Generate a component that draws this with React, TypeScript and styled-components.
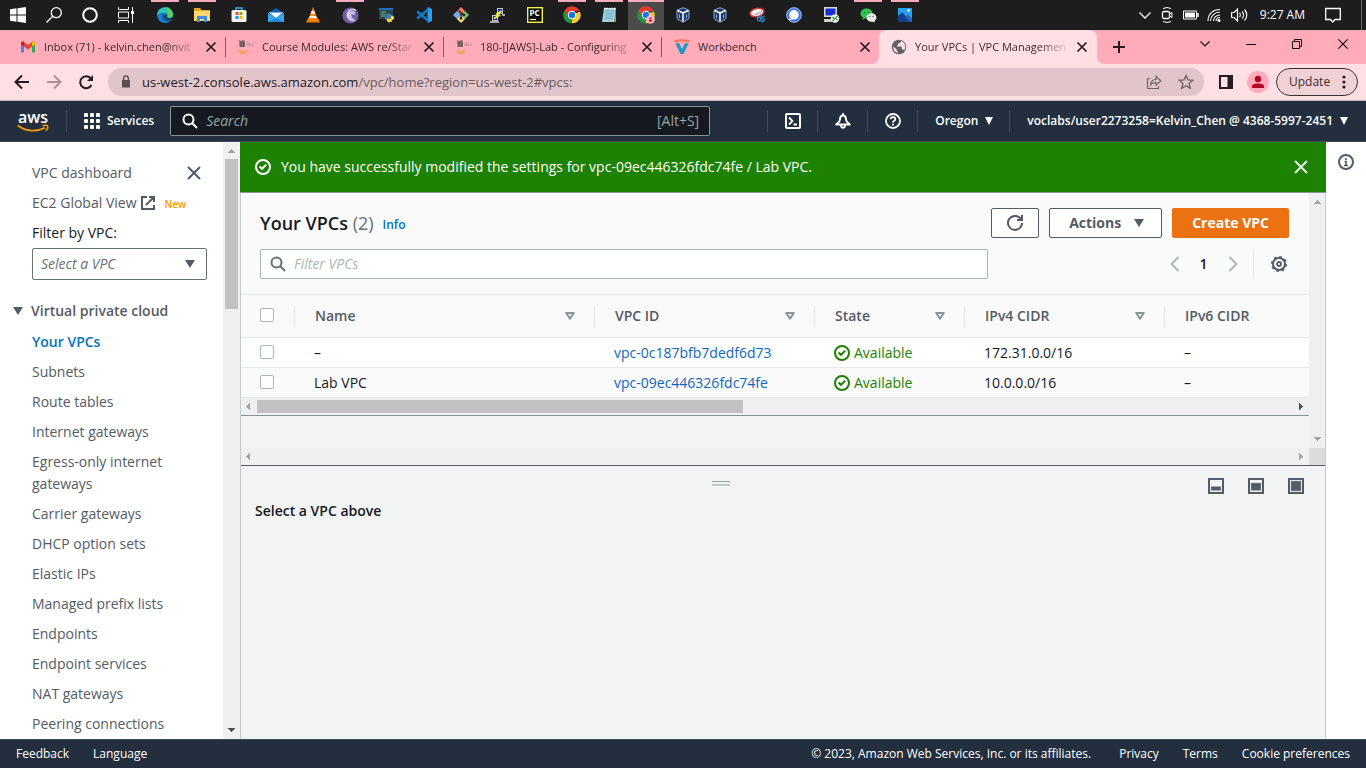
import React from "react";
import styled, { createGlobalStyle, css } from "styled-components";

const sans = '"Open Sans", "Noto Sans", sans-serif';

const Global = createGlobalStyle`
  *, *::before, *::after { box-sizing: border-box; }
  body { margin: 0; background: #fff; overflow: hidden; }
  button { font: inherit; color: inherit; background: none; border: 0; padding: 0; cursor: pointer; }
  a { color: inherit; text-decoration: none; }
  ul { list-style: none; margin: 0; padding: 0; }
  h1, h2, p { margin: 0; }
  svg { display: block; flex: none; }
`;

const Screen = styled.div`
  display: flex;
  flex-direction: column;
  height: 100vh;
  font-family: ${sans};
  font-size: 14px;
  line-height: 22px;
  color: #16191f;
`;

/* ---------- Windows task bar ---------- */

const TaskBar = styled.header`
  display: flex;
  flex: none;
  height: 30px;
  background: #1d1d1d;
  color: #fff;
  font-size: 12px;
`;
const TaskGroup = styled.div`
  display: flex;
`;
const AppGroup = styled(TaskGroup)`
  gap: 1px;
  margin-left: 3px;
`;
const TaskButton = styled.button<{ $open?: boolean; $active?: boolean }>`
  display: flex;
  align-items: center;
  justify-content: center;
  width: 36px;
  height: 30px;
  background: ${(p) => (p.$active ? "#4b4b4b" : "none")};
  ${(p) =>
    (p.$open || p.$active) &&
    css`
      background-image: linear-gradient(#ffabb9, #ffabb9);
      background-repeat: no-repeat;
      background-position: top;
      background-size: ${p.$active ? "36px" : "28px"} 2px;
    `}
`;
const Tray = styled.div`
  display: flex;
  align-items: center;
  gap: 8px;
  margin-left: auto;
`;
const Clock = styled.time`
  margin: 0 12px 0 4px;
`;
const ShowDesktop = styled.button`
  width: 5px;
  height: 30px;
  margin-left: 12px;
  border-left: 1px solid #6b6b6b;
`;

/* ---------- Browser frame ---------- */

const TabStrip = styled.div`
  display: flex;
  flex: none;
  height: 34px;
  padding-left: 8px;
  background: #ffabb9;
  font-size: 11px;
  color: #3a2a2d;
`;
const Tab = styled.div<{ $active?: boolean; $divided?: boolean }>`
  position: relative;
  display: flex;
  align-items: center;
  flex: 0 1 218px;
  min-width: 0;
  padding: 0 9px 0 12px;
  ${(p) =>
    p.$divided &&
    css`
      background: linear-gradient(#84585f, #84585f) right center / 1px 20px no-repeat;
    `}
  ${(p) =>
    p.$active &&
    css`
      margin-left: -1px;
      background: #ffdfe4;
      border-radius: 8px 8px 0 0;
      &::before,
      &::after {
        content: "";
        position: absolute;
        bottom: 0;
        width: 8px;
        height: 8px;
      }
      &::before {
        left: -8px;
        background: radial-gradient(circle at 0 0, transparent 8px, #ffdfe4 8px);
      }
      &::after {
        right: -8px;
        background: radial-gradient(circle at 100% 0, transparent 8px, #ffdfe4 8px);
      }
    `}
`;
const TabTitle = styled.span<{ $fade: boolean }>`
  flex: 1;
  min-width: 0;
  margin: 0 6px 0 8px;
  overflow: hidden;
  white-space: nowrap;
  ${(p) => p.$fade && "mask-image: linear-gradient(to right, #000 calc(100% - 30px), transparent);"}
`;
const WindowButton = styled.button`
  display: flex;
  align-items: center;
  justify-content: center;
  width: 46px;
  height: 28px;
`;
const NewTab = styled(WindowButton)`
  width: 28px;
  height: 34px;
  margin: 0 auto 0 8px;
`;
const Toolbar = styled.div`
  display: flex;
  flex: none;
  align-items: center;
  height: 37px;
  padding: 0 8px 1px 6px;
  background: #ffdfe4;
  border-bottom: 1px solid #c8b6b9;
  font-size: 13px;
`;
const ToolButton = styled.button`
  display: flex;
  align-items: center;
  justify-content: center;
  width: 32px;
  height: 28px;
`;
const Omnibox = styled.div`
  display: flex;
  align-items: center;
  flex: 1;
  height: 28px;
  margin: 0 6px;
  padding: 0 2px 0 13px;
  border-radius: 14px;
  background: #e1c5ca;
`;
const Url = styled.span`
  flex: 1;
  margin-left: 11px;
  color: #6c5a5d;
  white-space: nowrap;
  b {
    font-weight: 400;
    color: #241c1e;
  }
`;
const Avatar = styled.span`
  display: flex;
  width: 22px;
  height: 22px;
  border-radius: 11px;
  background: #ffabb9;
`;
const UpdateButton = styled.button`
  display: flex;
  align-items: center;
  justify-content: space-between;
  width: 82px;
  height: 28px;
  margin-left: 2px;
  padding: 0 11px 0 12px;
  border: 1px solid #3b3335;
  border-radius: 14px;
  background: #efd1d6;
  font-size: 12px;
  color: #3a2a2d;
`;

/* ---------- Console navigation ---------- */

const ConsoleNav = styled.nav`
  display: flex;
  flex: none;
  align-items: center;
  height: 41px;
  background: #232f3e;
  border-bottom: 1px solid #414d5c;
  color: #fff;
  font-size: 12px;
  font-weight: 600;
`;
const NavCell = styled.div`
  display: flex;
  align-items: center;
  height: 22px;
  padding: 0 16px 0 17px;
  border-left: 1px solid #414d5c;
`;
const LogoLink = styled.a`
  padding: 0 17px;
`;
const AccountCell = styled(NavCell)`
  padding-right: 18px;
`;
const NavButton = styled.button`
  display: flex;
  align-items: center;
  gap: 7px;
  white-space: nowrap;
`;
const SearchBox = styled.label`
  display: flex;
  align-items: center;
  flex: 0 1 540px;
  height: 30px;
  padding: 0 10px 0 11px;
  border: 1px solid #879596;
  border-radius: 2px;
  background: #16191f;
  color: #95a5a6;
  font-size: 14px;
  font-weight: 400;
`;
const SearchInput = styled.input`
  flex: 1;
  min-width: 0;
  margin-left: 8px;
  padding: 0;
  border: 0;
  outline: 0;
  background: none;
  font: inherit;
  color: inherit;
  &::placeholder {
    color: inherit;
    font-style: italic;
    opacity: 1;
  }
`;
const NavEnd = styled.div`
  display: flex;
  margin-left: auto;
`;

/* ---------- Body ---------- */

const Body = styled.div`
  display: flex;
  flex: 1;
  min-height: 0;
`;
const Sidebar = styled.aside`
  display: flex;
  flex: none;
  width: 240px;
  overflow: hidden;
  color: #545b64;
`;
const SideContent = styled.div`
  flex: 1;
  padding: 20px 16px 0 13px;
`;
const SideRow = styled.div`
  display: flex;
  align-items: center;
  height: 22px;
  margin-bottom: 8px;
  padding-left: 19px;
`;
const SideClose = styled.button`
  margin: 0 5px 0 auto;
`;
const NewBadge = styled.span`
  margin: 2px 0 0 8px;
  font-size: 10px;
  font-weight: 600;
  color: #ff9900;
`;
const FilterLabel = styled.label`
  display: block;
  padding-left: 19px;
  color: #16191f;
`;
const SelectWrap = styled.div`
  display: grid;
  align-items: center;
  height: 32px;
  margin: 4px 0 20px 19px;
  border: 1px solid #687078;
  border-radius: 2px;
  > * {
    grid-area: 1 / 1;
  }
  > svg {
    justify-self: end;
    margin-right: 11px;
    pointer-events: none;
  }
`;
const VpcSelect = styled.select`
  width: 100%;
  height: 30px;
  padding: 0 8px;
  appearance: none;
  border: 0;
  background: none;
  font: inherit;
  font-style: italic;
  color: #687078;
`;
const SectionToggle = styled.button`
  display: flex;
  align-items: center;
  gap: 8px;
  margin-bottom: 5px;
  font-weight: 600;
`;
const SideItem = styled.li<{ $current?: boolean }>`
  padding: 4px 0 4px 19px;
  ${(p) => p.$current && "color: #0073bb; font-weight: 600;"}
`;

const Track = styled.div<{ $horizontal?: boolean }>`
  display: flex;
  flex: none;
  flex-direction: ${(p) => (p.$horizontal ? "row" : "column")};
  align-items: center;
  justify-content: space-between;
  ${(p) => (p.$horizontal ? "height: 17px; padding: 0 6px 0 5px;" : "min-width: 16px; padding: 7px 0;")}
  background: #f0f0f0;
`;
const SideTrack = styled(Track)`
  width: 17px;
`;
const Thumb = styled.div<{ $length: string; $horizontal?: boolean }>`
  flex: none;
  ${(p) =>
    p.$horizontal
      ? `width: ${p.$length}; height: 13px; margin: 0 auto 0 7px;`
      : `width: 13px; height: ${p.$length}; margin: 6px 0 auto;`}
  background: #c1c1c1;
`;

const Main = styled.main`
  display: flex;
  flex: 1;
  flex-direction: column;
  min-width: 0;
`;
const Flash = styled.div`
  display: flex;
  align-items: center;
  gap: 10px;
  height: 51px;
  padding: 0 17px 0 15px;
  background: #1d8102;
  border-bottom: 1px solid #879596;
  color: #fff;
`;
const FlashClose = styled.button`
  margin-left: auto;
`;
const Split = styled.div`
  display: flex;
  flex: 1;
  flex-direction: column;
  min-height: 0;
  border: solid #c5cbcb;
  border-width: 0 1px;
  background: #f2f3f3;
`;
const ListArea = styled.div`
  display: grid;
  grid-template-columns: minmax(0, 1fr) 16px;
  grid-template-rows: 255px 17px;
  border-bottom: 1px solid #545b64;
`;
const Corner = styled.div`
  background: #dcdcdc;
`;
const ListPane = styled.section`
  overflow: hidden;
`;
const ListHeader = styled.div`
  display: flex;
  flex-direction: column;
  gap: 11px;
  padding: 15px 20px 15px 19px;
  background: #fafafa;
  border-bottom: 1px solid #e5e8e8;
`;
const HeaderRow = styled.div`
  display: flex;
  align-items: center;
  height: 30px;
`;
const Title = styled.h1`
  font-size: 18px;
  font-weight: 600;
  span {
    font-weight: 400;
    color: #687078;
  }
`;
const InfoLink = styled.a`
  margin: 4px auto 0 9px;
  font-size: 12px;
  font-weight: 600;
  color: #0073bb;
`;
const Button = styled.button<{ $primary?: boolean }>`
  display: flex;
  align-items: center;
  justify-content: center;
  gap: 13px;
  height: 30px;
  margin-left: 10px;
  padding: 0 ${(p) => (p.$primary ? 19 : 17)}px 0 19px;
  border: 1px solid ${(p) => (p.$primary ? "#ec7211" : "#545b64")};
  border-radius: 2px;
  background: ${(p) => (p.$primary ? "#ec7211" : "#fff")};
  color: ${(p) => (p.$primary ? "#fff" : "#545b64")};
  font-weight: 700;
`;
const IconButton = styled(Button)`
  width: 48px;
  padding: 0;
`;
const FilterBox = styled.label`
  display: flex;
  align-items: center;
  flex: 0 1 728px;
  height: 30px;
  padding-left: 9px;
  border: 1px solid #aab7b8;
  border-radius: 2px;
  background: #fff;
  color: #aab7b8;
`;
const Pager = styled.div`
  display: flex;
  align-items: center;
  height: 30px;
  margin: 0 6px 0 auto;
  font-weight: 600;
`;
const PageButton = styled.button`
  display: flex;
  align-items: center;
  justify-content: center;
  width: 29px;
  height: 30px;
`;
const GearButton = styled.button`
  height: 30px;
  padding: 0 2px 0 17px;
  border-left: 1px solid #e5e8e8;
`;

const Table = styled.table`
  width: 100%;
  table-layout: fixed;
  border-spacing: 0;
  background: #fff;
`;
const Th = styled.th<{ $width?: number }>`
  ${(p) => p.$width && `width: ${p.$width}px;`}
  height: 43px;
  padding: 0;
  background: #fafafa;
  border-bottom: 1px solid #e5e8e8;
  text-align: left;
  font-weight: 600;
  color: #545b64;
`;
const HeadCell = styled.div`
  display: flex;
  align-items: center;
  justify-content: space-between;
  height: 21px;
  padding: 0 19px 0 20px;
  border-left: 1px solid #e0e4e4;
`;
const Td = styled.td`
  height: 30px;
  padding: 0 0 0 20px;
  border-bottom: 1px solid #e5e8e8;
  white-space: nowrap;
  tr:nth-child(even) > & {
    background: #fafafa;
  }
`;
const CheckTd = styled(Td)`
  padding-left: 19px;
`;
const Check = styled.input`
  display: block;
  width: 14px;
  height: 14px;
  margin: 0 0 2px;
  appearance: none;
  border: 1px solid #aab7b8;
  border-radius: 2px;
  background: #fff;
`;
const HeadCheck = styled(Check)`
  margin-left: 19px;
`;
const CellLink = styled.a`
  color: #1166bb;
`;
const Status = styled.span`
  display: flex;
  align-items: center;
  gap: 4px;
  color: #1d8102;
`;
const TableTrack = styled(Track)`
  border-bottom: 1px solid #879596;
  height: 18px;
`;

const DetailBar = styled.div`
  display: flex;
  align-items: center;
  padding: 0 9px 0 5px;
  height: 34px;
`;
const Grip = styled.div`
  flex: 1;
  display: flex;
  justify-content: center;
`;
const GripLines = styled.span`
  width: 18px;
  height: 5px;
  border-top: 1px solid #96a0a0;
  border-bottom: 2px solid #c4c9c9;
`;
const SizeButton = styled.button`
  display: flex;
  justify-content: center;
  width: 40px;
  padding-top: 6px;
`;
const DetailTitle = styled.h2`
  padding-left: 14px;
  font-size: 14px;
  font-weight: 600;
`;
const HelpRail = styled.aside`
  display: flex;
  flex: none;
  justify-content: center;
  align-items: flex-start;
  width: 40px;
  padding-top: 12px;
`;

const Footer = styled.footer`
  display: flex;
  flex: none;
  align-items: center;
  gap: 24px;
  height: 29px;
  padding: 0 16px;
  border-top: 1px solid #414d5c;
  background: #232f3e;
  color: #fff;
  font-size: 12px;
`;
const Copyright = styled.span`
  margin: 0 4px 0 auto;
`;

/* ---------- Icons ---------- */

type Stroke = { size?: number; color?: string; width?: number; d: string; box?: number };
const Line = ({ size = 16, color = "currentColor", width = 2, d, box = 16 }: Stroke) => (
  <svg width={size} height={size} viewBox={`0 0 ${box} ${box}`} fill="none" stroke={color} strokeWidth={width}>
    <path d={d} />
  </svg>
);
const Cross = ({ size = 16, color = "#545b64", width = 2 }: { size?: number; color?: string; width?: number }) => (
  <Line size={size} color={color} width={width} d="M2 2l12 12M14 2L2 14" />
);
const Caret = ({ w = 10, color = "currentColor" }: { w?: number; color?: string }) => (
  <svg width={w} height="8" viewBox="0 0 10 8" fill={color} preserveAspectRatio="none">
    <path d="M0 0h10L5 8z" />
  </svg>
);
const SortIcon = () => (
  <svg width="10" height="8" viewBox="0 0 10 8" fill="none" stroke="#879596" strokeWidth="2" strokeLinejoin="round">
    <path d="M1.2 1h7.6L5 6.6z" />
  </svg>
);
const OkIcon = () => (
  <svg width="16" height="16" viewBox="0 0 16 16" fill="none" stroke="currentColor" strokeWidth="2">
    <circle cx="8" cy="8" r="7" />
    <path d="M4.500 7.500L7 9.800l4.200-4.200" />
  </svg>
);
const Magnifier = ({ color }: { color: string }) => (
  <svg width="16" height="16" viewBox="0 0 16 16" fill="none" stroke={color} strokeWidth="2">
    <circle cx="6.500" cy="6.500" r="5" />
    <path d="M10.300 10.300L15 15" />
  </svg>
);
const arrowPaths = { up: "M0 4h7L3.500 0z", down: "M0 0h7L3.500 4z", left: "M4 0v7L0 3.500z", right: "M0 0v7l4-3.500z" };
const ScrollArrow = ({ dir, dark }: { dir: keyof typeof arrowPaths; dark?: boolean }) => {
  const flat = dir === "up" || dir === "down";
  return (
    <svg width={flat ? 7 : 4} height={flat ? 4 : 7} fill={dark ? "#505050" : "#a3a3a3"} shapeRendering="crispEdges">
      <path d={arrowPaths[dir]} />
    </svg>
  );
};
const AwsLogo = () => (
  <svg width="32" height="28" viewBox="0 -4 32 28">
    <text x="16" y="12" textAnchor="middle" fontFamily="Open Sans, sans-serif" fontSize="16" fontWeight="600" fill="#fff">
      aws
    </text>
    <path d="M.8 14.500C9 20.800 20 21 28 16.800" fill="none" stroke="#f90" strokeWidth="1.800" />
    <path d="M25.500 14.900c2-1 4.500-.8 5 0 .4 1-.2 3.500-1.800 5" fill="none" stroke="#f90" strokeWidth="1.500" />
  </svg>
);
const CourseIcon = () => (
  <svg width="16" height="16" viewBox="0 0 16 16">
    <path d="M1 1l2 1 2-1 2 1v6H1.500z" fill="#8a6b72" />
    <path d="M3 3v5M5.500 3v5" stroke="#55454a" strokeWidth=".8" />
    <path d="M9 3.500v3h1.500v-3M12 3.500v3h3v-3" fill="none" stroke="#d296a1" strokeWidth="1.200" />
    <path d="M1.500 11c1 4 5.500 4 7 0" fill="none" stroke="#ff9a3c" strokeWidth="2" />
  </svg>
);
const GmailIcon = () => (
  <svg width="16" height="16" viewBox="0 0 16 16">
    <path d="M1 4v9.500h3V7z" fill="#4285f4" />
    <path d="M15 4v9.500h-3V7z" fill="#34a853" />
    <path d="M1 4.500C1 2.500 3 2 4 3l4 3 4-3c1-1 3-.5 3 1.500L12 7.500l-4 3-4-3z" fill="#ea4335" />
    <path d="M12 3c1-1 3-.5 3 1.500v1L12 7.500z" fill="#fbbc04" />
    <path d="M1 4.500C1 3 2 2.500 3 2.600L4 3v4.500L1 5.500z" fill="#c5221f" />
  </svg>
);
const WorkbenchIcon = () => (
  <svg width="16" height="16" viewBox="0 0 16 16">
    <path d="M0 1.500C5-.3 11-.3 16 1.500l-1 2C10 2 6 2 1 3.500z" fill="#f4795b" />
    <path d="M1.500 4.500L5 4l3 6 3-6 3.500.5L9.500 15h-3z" fill="#2196c9" />
  </svg>
);
const GlobeIcon = () => (
  <svg width="16" height="16" viewBox="0 0 16 16">
    <circle cx="8" cy="8" r="7.300" fill="#5f6368" />
    <path d="M10 2c0 1.500-.8 2-2 2-.6 0-.8.400-.8 1.200 0 .7-.4 1-1.200 1v1.300h3.500c1 0 1.300.5 1.300 1.300v1.500c1.200 0 1.900.4 2.200 1.200A6 6 0 0 0 10 2zM2.200 7.500A6 6 0 0 0 7 13.800v-1.200c-.8 0-1.300-.5-1.300-1.300v-.8z" fill="#ffdfe4" />
  </svg>
);
const ChromeIcon = ({ badge }: { badge?: boolean }) => (
  <svg width="18" height="18" viewBox="0 0 18 18">
    <path d="M9 9l7.800-3.500A8.300 8.300 0 0 1 8.500 17.300z" fill="#fcc934" />
    <path d="M9 9l1 3-1.500 5.300A8.300 8.300 0 0 1 1.600 4.500z" fill="#229342" />
    <path d="M1.600 4.500A8.300 8.300 0 0 1 16.500 5.200H9l-3.500 6z" fill="#e33b2e" />
    <circle cx="9" cy="9" r="4.200" fill="#fff" />
    <circle cx="9" cy="9" r="3.200" fill="#1a73e8" />
    {badge && <circle cx="13.500" cy="13.500" r="4.300" fill="#f7b3bf" />}
    {badge && <path d="M12 15.200a1.500 1.300 0 0 1 3 0zM12.800 12.500a.7.7 0 1 0 1.400 0 .7.7 0 1 0-1.400 0" fill="#b00020" stroke="#b00020" strokeWidth=".5" />}
  </svg>
);
const CubeIcon = () => (
  <svg width="14" height="16" viewBox="0 0 14 16" stroke="#fff" strokeWidth="1">
    <path d="M7 .7l6 2.500v8.300L7 15.300 1 11.500V3.200z" fill="#1d3a6b" stroke="#8fa8cf" />
    <path d="M1.500 3.500L7 6l5.500-2.500M7 6v8.500" fill="none" strokeWidth="1.500" />
    <path d="M3.500 7.500v3.500M10.500 7.500v3.500" stroke="#8fb0e0" />
  </svg>
);

const taskIcons: { name: string; open?: boolean; active?: boolean; icon: React.ReactNode }[] = [
  { name: "Edge", open: true, icon: (
    <svg width="16" height="16" viewBox="0 0 16 16">
      <circle cx="8" cy="8" r="8" fill="#1583d1" />
      <path d="M.3 6.500A8 8 0 0 1 16 7.500c0 3-4 4-6 2.500 1.500-2 0-4-2.500-4.200C4.500 5.500 2 6 .3 8z" fill="#35c2b0" />
      <path d="M9 .1A8 8 0 0 1 16 8c-.3 2.500-4 3.200-6 2C12 7 11 3 9 .1z" fill="#55d16a" />
      <path d="M6 6.500c-2 3.500 0 8 5 8.300a8 8 0 0 0 3.700-2.500C10 14 8 11.500 8.500 9.500z" fill="#0f4f96" />
      <path d="M8.500 7c2 .5 1.500 2 1 3 2 2 5 1.300 6.300 0-.3 1-.6 1.800-1.100 2.300C10.500 13.500 7 10 8.500 7z" fill="#1d1d1d" />
    </svg>) },
  { name: "Files", open: true, icon: (
    <svg width="16" height="14" viewBox="0 0 16 14">
      <path d="M0 0h6l1.500 2H16v11H0z" fill="#e5a919" /><path d="M0 3h16v10H0z" fill="#ffd76e" />
      <path d="M3 14V8h10v6h-3v-3H6v3z" fill="#3f8fdc" />
    </svg>) },
  { name: "Store", icon: (
    <svg width="16" height="16" viewBox="0 0 16 16">
      <path d="M5 3V1h6v2" fill="none" stroke="#39aee8" strokeWidth="1.500" /><rect x=".5" y="3" width="15" height="12" rx="1.500" fill="#f4f4f4" />
      <path d="M4.500 5H7.500V8H4.500z" fill="#f25022" /><path d="M8.500 5H11.500V8H8.500z" fill="#7fba00" />
      <path d="M4.500 9H7.500V12H4.500z" fill="#00a4ef" /><path d="M8.500 9H11.500V12H8.500z" fill="#ffb900" />
    </svg>) },
  { name: "Mail", icon: (
    <svg width="16" height="14" viewBox="0 0 16 14">
      <path d="M0 5l8-5 8 5v9H0z" fill="#0f5fb0" />
      <path d="M0 5l8 5 8-5v9H0z" fill="#35a8ee" /><path d="M1 4.500h14L8 10z" fill="#f2f8ff" /><path d="M0 14l8-4 8 4z" fill="#1f86d8" />
    </svg>) },
  { name: "VLC", icon: (
    <svg width="14" height="16" viewBox="0 0 14 16">
      <path d="M2 11h10l2 4.500H0z" fill="#f07c00" /><path d="M7 0l4.500 12c-2 1.500-7 1.500-9 0z" fill="#f58a12" />
      <path d="M5.600 4h2.800l1 2.800H4.600zM3.800 9h6.400l.7 2H3.100z" fill="#f4f4f4" />
    </svg>) },
  { name: "BitTorrent", open: true, icon: (
    <svg width="17" height="17" viewBox="0 0 17 17">
      <circle cx="8.500" cy="8.500" r="8" fill="#6f5fa8" />
      <path d="M14 3.500A5.500 5.500 0 1 0 13 13M13 6a3.500 3.500 0 1 0-1.500 5.500M12 8a1.800 1.800 0 1 0-2 2" fill="none" stroke="#e4def2" strokeWidth="1.300" />
    </svg>) },
  { name: "IDLE", icon: (
    <svg width="16" height="16" viewBox="0 0 16 16">
      <path d="M0 1h14v11H0z" fill="#35424f" /><path d="M0 1h14v2H0z" fill="#1d6fb8" />
      <path d="M2 5h5M2 7h4M2 9h5" stroke="#4cc38a" strokeWidth="1" />
      <path d="M7 8c0-2 5-2 5 0v3H8v2C5 13 5 9 8 9.500z" fill="#3d7fb5" /><path d="M12 8.500c4-.5 4 4 1 4.500 0 3-5 3-5 .5v-2h4z" fill="#ffd43b" />
    </svg>) },
  { name: "VS Code", icon: (
    <svg width="16" height="16" viewBox="0 0 16 16">
      <path d="M11.500 0L16 2v12l-4.500 2z" fill="#2aa0ea" />
      <path d="M12 2.500L1.200 11.500M12 13.500L1.200 4.500" stroke="#1279c6" strokeWidth="2.600" />
    </svg>) },
  { name: "Git", icon: (
    <svg width="18" height="18" viewBox="0 0 18 18">
      <path d="M9 1l4 4-4 4-4-4z" fill="#f2775f" /><path d="M5 5l4 4-4 4-4-4z" fill="#7aa7f0" /><path d="M13 5l4 4-4 4-4-4z" fill="#74c365" /><path d="M9 9l4 4-4 4-4-4z" fill="#ffe08a" />
      <path d="M6.500 4.500l5 4.500M9 6.500v6.500" stroke="#222" strokeWidth="1.300" /><circle cx="9" cy="12.500" r="1.300" fill="#222" /><circle cx="12" cy="9" r="1.300" fill="#222" />
    </svg>) },
  { name: "PuTTY", icon: (
    <svg width="16" height="16" viewBox="0 0 16 16">
      <path d="M7 1h6v6H7zM2 8h6v6H2z" fill="#bfc3c6" /><path d="M8 2h4v4H8zM3 9h4v4H3z" fill="#1526b5" />
      <path d="M12 8h3M0 15h9" stroke="#d5d5d5" strokeWidth="1.500" /><path d="M11.500 4L7 7l2 1.500-5 3" fill="none" stroke="#ffef2a" strokeWidth="2" />
    </svg>) },
  { name: "PyCharm", icon: (
    <svg width="16" height="16" viewBox="0 0 16 16">
      <rect x=".7" y=".7" width="14.600" height="14.600" fill="#0a0a0a" stroke="#f5f04a" strokeWidth="1.400" />
      <text x="2.500" y="9" fontFamily="Open Sans, sans-serif" fontWeight="700" fontSize="8" fill="#fff">PC</text>
      <path d="M3 12.500h6" stroke="#fff" strokeWidth="1.200" />
    </svg>) },
  { name: "Chrome", open: true, icon: <ChromeIcon /> },
  { name: "Notepad", open: true, icon: (
    <svg width="16" height="16" viewBox="0 0 16 16">
      <path d="M3 1h12l-1.500 14H1z" fill="#9fd3de" /><path d="M13.500 15L15 1v14z" fill="#b98a4b" />
      <path d="M4 4h9M4 6.500h8.500M3.500 9h9M3.500 11.500h8.500" stroke="#6fa8b8" strokeWidth="1" /><path d="M3 1.500h11.500" stroke="#e8f4f6" strokeWidth="1.500" strokeDasharray="1.500 1" />
    </svg>) },
  { name: "Chrome profile", active: true, icon: <ChromeIcon badge /> },
  { name: "VirtualBox", icon: <CubeIcon /> },
  { name: "VirtualBox manager", icon: <CubeIcon /> },
  { name: "Snipping Tool", icon: (
    <svg width="17" height="16" viewBox="0 0 17 16">
      <ellipse cx="8" cy="5.500" rx="7" ry="4" fill="#f3f3f3" stroke="#d8342f" strokeWidth="1.500" transform="rotate(-12 8 5.500)" />
      <path d="M6 8l7-3.500" stroke="#999" strokeWidth="1.200" /><circle cx="10" cy="12" r="1.700" fill="none" stroke="#2289c9" strokeWidth="1.400" /><circle cx="13.500" cy="13" r="1.700" fill="none" stroke="#2289c9" strokeWidth="1.400" /><path d="M11 10.500L16 9M12 11V7" stroke="#2289c9" />
    </svg>) },
  { name: "Signal", icon: (
    <svg width="16" height="16" viewBox="0 0 16 16">
      <circle cx="8" cy="8" r="7.300" fill="#3a76f0" stroke="#a8c4fb" strokeWidth="1" /><circle cx="8" cy="7.800" r="4.800" fill="#fff" /><path d="M3 13l1.500-4 3 3z" fill="#fff" />
    </svg>) },
  { name: "Remote desktop", icon: (
    <svg width="17" height="16" viewBox="0 0 17 16">
      <path d="M1 0h13v10H1z" fill="#d9d9d2" /><path d="M2.500 1.500h10v7h-10z" fill="#1a2ed0" /><path d="M1 12h11v3H1z" fill="#cfcfc8" />
      <circle cx="12" cy="11.500" r="4.200" fill="#eee" /><path d="M9.500 10l2 2-2 2M14.500 9l-2 2 2 2" fill="none" stroke="#3b9c36" strokeWidth="1.200" />
    </svg>) },
  { name: "WeChat", open: true, icon: (
    <svg width="17" height="15" viewBox="0 0 17 15">
      <ellipse cx="6.500" cy="5.500" rx="6" ry="5" fill="#2dc84d" /><path d="M3 9l-.5 3 3-2z" fill="#2dc84d" /><ellipse cx="11.500" cy="9.500" rx="5" ry="4.300" fill="#e9e9e9" /><path d="M14 12l1 2.500-3-1z" fill="#e9e9e9" />
      <circle cx="4.500" cy="4.500" r=".8" fill="#164" /><circle cx="8.500" cy="4.500" r=".8" fill="#164" /><circle cx="10" cy="8.500" r=".7" fill="#666" /><circle cx="13" cy="8.500" r=".7" fill="#666" />
    </svg>) },
  { name: "Photos", open: true, icon: (
    <svg width="14" height="14" viewBox="0 0 14 14">
      <path d="M0 0h14v14H0z" fill="#25a0f0" /><path d="M0 8l4-4 9 10H0z" fill="#123f86" /><path d="M7 9l3-2.500 4 4V14h-2z" fill="#2d62b8" /><circle cx="10.500" cy="2.500" r="1.200" fill="#fff" />
    </svg>) },
];

/* ---------- Data ---------- */

const tabs = [
  { title: "Inbox (71) - kelvin.chen@nvit", icon: <GmailIcon />, divided: true, fade: true },
  { title: "Course Modules: AWS re/Star", icon: <CourseIcon />, divided: true, fade: true },
  { title: "180-[JAWS]-Lab - Configuring", icon: <CourseIcon />, divided: true, fade: true },
  { title: "Workbench", icon: <WorkbenchIcon />, fade: false },
  { title: "Your VPCs | VPC Managemen", icon: <GlobeIcon />, active: true, fade: true },
];
const sideItems = [
  "Your VPCs", "Subnets", "Route tables", "Internet gateways", "Egress-only internet gateways",
  "Carrier gateways", "DHCP option sets", "Elastic IPs", "Managed prefix lists", "Endpoints",
  "Endpoint services", "NAT gateways", "Peering connections",
];
const columns: { label: string; width?: number }[] = [
  { label: "Name", width: 300 },
  { label: "VPC ID", width: 220 },
  { label: "State", width: 150 },
  { label: "IPv4 CIDR", width: 200 },
  { label: "IPv6 CIDR" },
];
const vpcs = [
  { name: "–", id: "vpc-0c187bfb7dedf6d73", cidr: "172.31.0.0/16" },
  { name: "Lab VPC", id: "vpc-09ec446326fdc74fe", cidr: "10.0.0.0/16" },
];

function WindowsBar() {
  return (
    <TaskBar>
      <TaskGroup>
        <TaskButton aria-label="Start">
          <svg width="16" height="16" viewBox="0 0 16 16" fill="#fff"><path d="M0 2.200L6.500 1.300V7.500H0zM7.500 1.200L16 0v7.500H7.500zM0 8.500h6.500v6.200L0 13.800zM7.500 8.500H16V16l-8.500-1.200z" /></svg>
        </TaskButton>
        <TaskButton aria-label="Search">
          <svg width="16" height="16" viewBox="0 0 16 16" fill="none" stroke="#fff" strokeWidth="1.300"><circle cx="10.300" cy="5.700" r="5" /><path d="M6.700 9.300L.5 15.500" /></svg>
        </TaskButton>
        <TaskButton aria-label="Cortana">
          <svg width="16" height="16" viewBox="0 0 16 16" fill="none" stroke="#fff" strokeWidth="2"><circle cx="8" cy="8" r="6.800" /></svg>
        </TaskButton>
        <TaskButton aria-label="Task view">
          <svg width="16" height="16" viewBox="0 0 16 16" fill="none" stroke="#fff"><path d="M.5 0v2.500h10V0M.5 16v-2.500h10V16M.5 5h10v6H.5zM14.500 0v16" /><path d="M13 4h3v3h-3z" fill="#fff" stroke="none" /></svg>
        </TaskButton>
      </TaskGroup>
      <AppGroup>
        {taskIcons.map((t) => (
          <TaskButton key={t.name} aria-label={t.name} $open={t.open} $active={t.active}>{t.icon}</TaskButton>
        ))}
      </AppGroup>
      <Tray>
        <Line size={12} width={1.3} box={12} d="M.5 3.500l5.500 5.500 5.500-5.500" />
        <svg width="16" height="16" viewBox="0 0 16 16" fill="none" stroke="#fff"><path d="M4 1.500q4-2 8 0M4 14.500q4 2 8 0" /><rect x="3.500" y="4.500" width="7" height="7" rx="1.500" strokeWidth="1.300" /><path d="M10.500 7l2.500-1.500v5L10.500 9" /></svg>
        <svg width="16" height="10" viewBox="0 0 16 10" fill="none" stroke="#fff"><path d="M.5 1h13v8H.5z" /><path d="M2 2.500h10v5H2z" fill="#fff" stroke="none" /><path d="M15 3v4" strokeWidth="1.500" /></svg>
        <svg width="16" height="14" viewBox="0 0 16 14" fill="none" stroke="#fff" strokeWidth="1.100"><path d="M1 13C1 6 6 1.500 13 1.500M3.500 13C3.500 8 8 4 13 4M6.500 13c0-3.500 3-6 6.500-6M9 13c0-2 2-3.500 4-3.500" /><circle cx="12" cy="12.500" r="1" fill="#fff" /></svg>
        <svg width="17" height="14" viewBox="0 0 17 14" fill="none" stroke="#fff" strokeWidth="1.200"><path d="M.6 4.500h2.500L6.500 1v12L3.100 9.500H.6zM8.500 5c1 1 1 3 0 4M11 3.500c2 2 2 5 0 7M13.500 1.500c3 3 3 8 0 11" /></svg>
        <Clock>9:27 AM</Clock>
        <Line size={16} width={1.3} d="M.7 1.500h14.600v11H10l-2.300 2.500L5.500 12.500H.7z" />
        <ShowDesktop aria-label="Show desktop" />
      </Tray>
    </TaskBar>
  );
}

function BrowserFrame() {
  return (
    <>
      <TabStrip>
        {tabs.map((t) => (
          <Tab key={t.title} $active={t.active} $divided={t.divided}>
            {t.icon}
            <TabTitle $fade={t.fade}>{t.title}</TabTitle>
            <button aria-label="Close tab"><Cross size={12} color="#241c1e" width={2.3} /></button>
          </Tab>
        ))}
        <NewTab aria-label="New tab"><Line size={12} width={2} box={12} color="#241c1e" d="M6 0v12M0 6h12" /></NewTab>
        <WindowButton aria-label="Search tabs"><Line size={10} width={1.2} box={10} color="#111" d="M.5 2.500L5 7l4.500-4.500" /></WindowButton>
        <WindowButton aria-label="Minimize"><Line size={10} width={1} box={10} color="#111" d="M0 5.500h10" /></WindowButton>
        <WindowButton aria-label="Restore"><Line size={10} width={1} box={10} color="#111" d="M.5 2.500h7v7h-7zM2.500 2.500v-2h7v7h-2" /></WindowButton>
        <WindowButton aria-label="Close"><Line size={10} width={1.1} box={10} color="#111" d="M0 0l10 10M10 0L0 10" /></WindowButton>
      </TabStrip>
      <Toolbar>
        <ToolButton aria-label="Back"><Line color="#241c1e" d="M15 8H2M8 1.500L1.500 8 8 14.500" /></ToolButton>
        <ToolButton aria-label="Forward"><Line color="#a89296" d="M1 8h13M8 1.500L14.500 8 8 14.500" /></ToolButton>
        <ToolButton aria-label="Reload">
          <svg width="16" height="16" viewBox="0 0 16 16" fill="none" stroke="#241c1e" strokeWidth="2"><path d="M13.500 11A6 6 0 1 1 12.500 4" /><path d="M15 1v6H9z" fill="#241c1e" stroke="none" /></svg>
        </ToolButton>
        <Omnibox>
          <svg width="10" height="13" viewBox="0 0 10 13"><path d="M1 5h8v7.500H1z" fill="#5a4c4f" /><path d="M2.700 5.500V3.200a2.300 2.300 0 0 1 4.600 0v2.300" fill="none" stroke="#5a4c4f" strokeWidth="1.400" /></svg>
          <Url><b>us-west-2.console.aws.amazon.com</b>/vpc/home?region=us-west-2#vpcs:</Url>
          <ToolButton aria-label="Share"><Line color="#766568" width={1.2} d="M4 4.500H1.500v10h11V12M4.500 11C5 7 7.500 5.300 10 5.300V2.500L14.800 7 10 11V8.300c-2.500 0-4 .8-5.500 2.700z" /></ToolButton>
          <ToolButton aria-label="Bookmark"><Line color="#766568" width={1.4} d="M8 1.500l1.900 4.400 4.800.4-3.600 3.200 1.100 4.700L8 11.700l-4.200 2.500 1.100-4.700L1.300 6.300l4.800-.4z" /></ToolButton>
        </Omnibox>
        <ToolButton aria-label="Side panel">
          <svg width="14" height="14" viewBox="0 0 14 14"><path d="M1 1h12v12H1z" fill="none" stroke="#241c1e" strokeWidth="2" /><path d="M8.500 1H13v12H8.500z" fill="#241c1e" /></svg>
        </ToolButton>
        <ToolButton aria-label="Profile">
          <Avatar><svg width="22" height="22" viewBox="0 0 22 22" fill="#b5002a"><circle cx="11" cy="8" r="3.200" /><path d="M5 17v-2c0-3.500 12-3.500 12 0v2z" /></svg></Avatar>
        </ToolButton>
        <UpdateButton>
          Update
          <svg width="4" height="14" viewBox="0 0 4 14" fill="#241c1e"><circle cx="2" cy="2" r="1.600" /><circle cx="2" cy="7" r="1.600" /><circle cx="2" cy="12" r="1.600" /></svg>
        </UpdateButton>
      </Toolbar>
    </>
  );
}

function AwsNav() {
  return (
    <ConsoleNav>
      <LogoLink href="#home" aria-label="AWS home"><AwsLogo /></LogoLink>
      <NavCell>
        <NavButton>
          <svg width="16" height="16" viewBox="0 0 16 16" fill="#fff">
            {[0, 6, 12].map((y) => [0, 6, 12].map((x) => <rect key={`${x}-${y}`} x={x} y={y} width="4" height="4" rx="1" />))}
          </svg>
          Services
        </NavButton>
      </NavCell>
      <SearchBox>
        <Magnifier color="#fff" />
        <SearchInput placeholder="Search" aria-label="Search" />
        [Alt+S]
      </SearchBox>
      <NavEnd>
        <NavCell>
          <NavButton aria-label="CloudShell">
            <svg width="16" height="16" viewBox="0 0 16 16" fill="none" stroke="#fff" strokeWidth="2"><rect x="1" y="1" width="14" height="14" rx="1" /><path d="M4 4.500L7.500 8 4 11.500M8.500 11.500H12" strokeWidth="1.800" /></svg>
          </NavButton>
        </NavCell>
        <NavCell>
          <NavButton aria-label="Notifications">
            <svg width="16" height="16" viewBox="0 0 16 16" fill="none" stroke="#fff" strokeWidth="1.900" strokeLinejoin="round"><path d="M8 2.500C5.500 2.500 5 4.300 5 6.500S2.800 10 1.200 11.500h13.600C13.200 10 11 8.700 11 6.500s-.5-4-3-4z" /><path d="M8 0v2.500M6 12.300c0 3.200 4 3.200 4 0" /></svg>
          </NavButton>
        </NavCell>
        <NavCell>
          <NavButton aria-label="Help">
            <svg width="16" height="16" viewBox="0 0 16 16" fill="none" stroke="#fff" strokeWidth="1.800"><circle cx="8" cy="8" r="7" /><path d="M5.700 6.200c0-3 4.600-2.700 4.600 0C10.300 8 8 7.600 8 9.700M8 10.700v1.700" /></svg>
          </NavButton>
        </NavCell>
        <NavCell><NavButton>Oregon <Caret w={8} /></NavButton></NavCell>
        <AccountCell><NavButton>voclabs/user2273258=Kelvin_Chen @ 4368-5997-2451 <Caret w={8} /></NavButton></AccountCell>
      </NavEnd>
    </ConsoleNav>
  );
}

function SideNav() {
  return (
    <Sidebar>
      <SideContent>
        <SideRow>
          <a href="#dashboard">VPC dashboard</a>
          <SideClose aria-label="Close navigation"><Cross /></SideClose>
        </SideRow>
        <SideRow>
          <a href="#global">EC2 Global View</a>
          <svg width="20" height="14" viewBox="0 0 20 14" fill="none" stroke="#545b64" strokeWidth="2"><path d="M11 1H6v12h12V9M13 1h5v5M18 1l-8 8" /></svg>
          <NewBadge>New</NewBadge>
        </SideRow>
        <FilterLabel htmlFor="vpc-filter">Filter by VPC:</FilterLabel>
        <SelectWrap>
          <VpcSelect id="vpc-filter"><option>Select a VPC</option></VpcSelect>
          <Caret color="#545b64" />
        </SelectWrap>
        <SectionToggle><Caret /> Virtual private cloud</SectionToggle>
        <ul>
          {sideItems.map((label, i) => (
            <SideItem key={label} $current={i === 0}><a href="#item">{label}</a></SideItem>
          ))}
        </ul>
      </SideContent>
      <SideTrack>
        <ScrollArrow dir="up" />
        <Thumb $length="150px" />
        <ScrollArrow dir="down" dark />
      </SideTrack>
    </Sidebar>
  );
}

function VpcTable() {
  return (
    <Table>
      <thead>
        <tr>
          <Th $width={53}><HeadCheck type="checkbox" aria-label="Select all VPCs" /></Th>
          {columns.map((c) => (
            <Th key={c.label} $width={c.width}>
              <HeadCell>{c.label}{c.width && <button aria-label={`Sort by ${c.label}`}><SortIcon /></button>}</HeadCell>
            </Th>
          ))}
        </tr>
      </thead>
      <tbody>
        {vpcs.map((v) => (
          <tr key={v.id}>
            <CheckTd><Check type="checkbox" aria-label={`Select ${v.id}`} /></CheckTd>
            <Td>{v.name}</Td>
            <Td><CellLink href="#vpc">{v.id}</CellLink></Td>
            <Td><Status><OkIcon />Available</Status></Td>
            <Td>{v.cidr}</Td>
            <Td>–</Td>
          </tr>
        ))}
      </tbody>
    </Table>
  );
}

const sizeIcons = [
  { label: "Small panel", d: "M3 8.500h10v4H3z" },
  { label: "Medium panel", d: "M3 5h10v7.500H3z" },
  { label: "Full panel", d: "M3 3h10v10H3z" },
];

export default function App() {
  return (
    <Screen>
      <Global />
      <WindowsBar />
      <BrowserFrame />
      <AwsNav />
      <Body>
        <SideNav />
        <Main>
          <Flash role="status">
            <OkIcon />
            You have successfully modified the settings for vpc-09ec446326fdc74fe / Lab VPC.
            <FlashClose aria-label="Dismiss"><Cross color="#e9f2e6" /></FlashClose>
          </Flash>
          <Split>
            <ListArea>
              <ListPane>
                <ListHeader>
                  <HeaderRow>
                    <Title>Your VPCs <span>(2)</span></Title>
                    <InfoLink href="#info">Info</InfoLink>
                    <IconButton aria-label="Refresh">
                      <svg width="16" height="16" viewBox="0 0 16 16" fill="none" stroke="#545b64" strokeWidth="2"><path d="M15 8a7 7 0 1 1-2-5l1 1.500M15 0v5h-5" /></svg>
                    </IconButton>
                    <Button>Actions <Caret /></Button>
                    <Button $primary>Create VPC</Button>
                  </HeaderRow>
                  <HeaderRow>
                    <FilterBox>
                      <Magnifier color="#687078" />
                      <SearchInput placeholder="Filter VPCs" aria-label="Filter VPCs" />
                    </FilterBox>
                    <Pager>
                      <PageButton aria-label="Previous page"><Line color="#aab7b8" d="M11.500 1L4.500 8l7 7" /></PageButton>
                      <PageButton>1</PageButton>
                      <PageButton aria-label="Next page"><Line color="#aab7b8" d="M4.500 1l7 7-7 7" /></PageButton>
                    </Pager>
                    <GearButton aria-label="Preferences">
                      <svg width="16" height="16" viewBox="0 0 16 16" fill="none" stroke="#545b64" strokeWidth="2"><circle cx="8" cy="8" r="6" /><circle cx="8" cy="8" r="2" strokeWidth="1.800" /><circle cx="8" cy="8" r="7.200" strokeWidth="1.600" strokeDasharray="2.830 2.830" /></svg>
                    </GearButton>
                  </HeaderRow>
                </ListHeader>
                <VpcTable />
                <TableTrack $horizontal>
                  <ScrollArrow dir="left" />
                  <Thumb $horizontal $length="46%" />
                  <ScrollArrow dir="right" dark />
                </TableTrack>
              </ListPane>
              <Track><ScrollArrow dir="up" /><ScrollArrow dir="down" /></Track>
              <Track $horizontal><ScrollArrow dir="left" /><ScrollArrow dir="right" /></Track>
              <Corner />
            </ListArea>
            <DetailBar>
              <Grip><GripLines /></Grip>
              {sizeIcons.map((s) => (
                <SizeButton key={s.label} aria-label={s.label}>
                  <svg width="16" height="16" viewBox="0 0 16 16"><path d="M1 1h14v14H1z" fill="none" stroke="#545b64" strokeWidth="2" /><path d={s.d} fill="#545b64" stroke="#a9adb1" strokeWidth=".5" /></svg>
                </SizeButton>
              ))}
            </DetailBar>
            <DetailTitle>Select a VPC above</DetailTitle>
          </Split>
        </Main>
        <HelpRail>
          <button aria-label="Help panel">
            <svg width="16" height="16" viewBox="0 0 16 16" fill="none" stroke="#545b64" strokeWidth="2"><circle cx="8" cy="8" r="7" /><path d="M8 4v2M6.500 7.500H8V11M6 11.500h4" strokeWidth="1.600" /></svg>
          </button>
        </HelpRail>
      </Body>
      <Footer>
        <a href="#feedback">Feedback</a>
        <a href="#language">Language</a>
        <Copyright>© 2023, Amazon Web Services, Inc. or its affiliates.</Copyright>
        <a href="#privacy">Privacy</a>
        <a href="#terms">Terms</a>
        <a href="#cookies">Cookie preferences</a>
      </Footer>
    </Screen>
  );
}
